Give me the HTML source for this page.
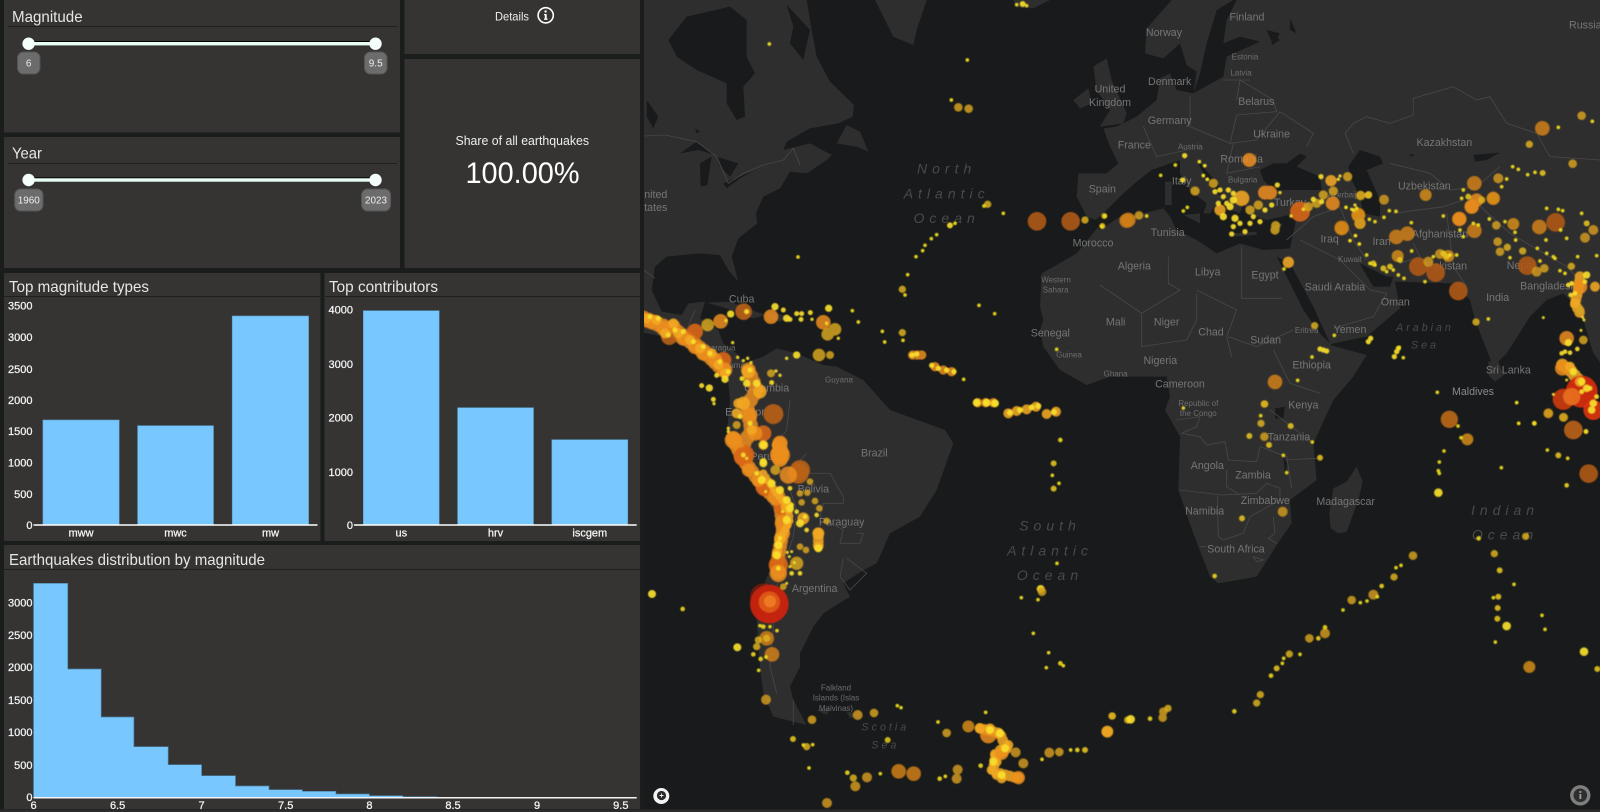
<!DOCTYPE html>
<html><head><meta charset="utf-8"><title>Earthquakes dashboard</title>
<style>
html,body{margin:0;padding:0;background:#1b1d1d;width:1600px;height:812px;overflow:hidden}
svg{display:block}
text{font-family:"Liberation Sans",sans-serif}
.t{fill:#e6e6e6;font-size:16px}
.k{fill:#f4f4f4;font-size:11px;stroke:#f4f4f4;stroke-width:.25px}
.e{text-anchor:end}.c{text-anchor:middle}
.l{fill:#767676;font-size:32px;text-anchor:middle}
.m{fill:#6e6e6e;font-size:24px;text-anchor:middle}
.o{fill:#4a4a4a;font-size:42px;font-style:italic;text-anchor:middle;letter-spacing:15px}
.p{fill:#4a4a4a;font-size:32px;font-style:italic;text-anchor:middle;letter-spacing:9px}
.land{fill:#2f2e2e}.w{fill:#181a1b}
.b{fill:none;stroke:#474747;stroke-width:2.6}
.q path{fill:none;stroke-linecap:round}
.a{stroke-width:11px;stroke:#f2e01e;opacity:.92}
.v{stroke-width:14px;stroke:#f0d81e;opacity:.9}
.n{stroke-width:18px;stroke:#e8c61e;opacity:.88}
.d{stroke-width:22px;stroke:#dcb01e;opacity:.85}
.f{stroke-width:26px;stroke:#d2a01c;opacity:.85}
.g{stroke-width:30px;stroke:#cf981c;opacity:.85}
.h{stroke-width:36px;stroke:#d48c18;opacity:.85}
.i{stroke-width:44px;stroke:#d08016;opacity:.85}
.j{stroke-width:52px;stroke:#bb6a16;opacity:.9}
.r{stroke-width:56px;stroke:#ad5914;opacity:.92}
.B{stroke:#b8621a;opacity:.92}
.D{stroke:#d8661a;opacity:.9}
.O{stroke:#ec8e1c;opacity:.85}
.A{stroke:#f3a822;opacity:.88}
.G{stroke:#d6a420;opacity:.85}
.Y{stroke:#f9de2c;opacity:.92}
.R{stroke:#cd2a10;opacity:.92}
</style></head><body>
<svg width="1600" height="812" viewBox="0 0 1600 812" xmlns="http://www.w3.org/2000/svg" style="filter:blur(.3px)">
<defs><filter id="s" x="-2%" y="-2%" width="104%" height="104%"><feGaussianBlur stdDeviation=".45"/></filter></defs>
<rect width="1600" height="812" fill="#1b1d1d"/>
<rect x="0" y="809.5" width="1600" height="3" fill="#2b2b2b"/>

<svg x="644" y="0" width="956" height="809.5" viewBox="644 0 956 809.5">
<rect x="644" y="0" width="956" height="810" fill="#181a1b"/>

<!-- Z4 land -->
<g transform="translate(630 0) scale(.33333)">
<path class="land" d="M0,0 L530,0 L545,90 L560,170 L600,245 L672,315 L668,350 L625,370 L540,385 L470,425 L460,450 L500,440 L540,430 L605,465 L530,520 L480,515 L450,565 L400,590 L378,640 L382,670 L325,715 L305,770 L325,845 L295,810 L270,765 L205,760 L110,770 L75,800 L65,870 L95,935 L155,945 L175,910 L225,905 L210,955 L265,990 L280,1030 L320,1060 L340,1090 L400,1070 L440,1045 L380,1140 L290,1140 L250,1100 L180,1050 L100,1010 L0,990 Z"/>
<path class="w" d="M115,120 L170,50 L300,20 L350,60 L350,170 L375,220 L340,260 L345,350 L320,360 L290,310 L290,250 L200,210 L140,170 Z"/>
<path class="w" d="M470,15 L540,90 L520,180 L480,130 L490,80 Z"/>
<path class="w" d="M150,460 L200,425 L255,465 L205,450 Z M210,490 L245,470 L232,555 L212,560 Z M260,470 L325,490 L300,530 L270,500 Z M280,550 L340,525 L375,510 L330,535 L290,565 Z M50,300 L85,350 L70,385 L50,350 Z M195,385 L210,395 L200,400 Z"/>
<path class="land" d="M620,430 L650,375 L690,395 L715,455 L680,440 Z M530,490 L610,460 L590,480 L530,520 Z"/>
<path class="land" d="M735,0 L890,0 L860,90 L850,135 L790,110 Z"/>
<path class="land" d="M1150,0 L1260,0 L1210,25 L1160,22 Z"/>
<path class="land" d="M1390,200 L1430,175 L1445,240 L1490,340 L1480,370 L1410,380 L1440,330 L1400,270 Z M1330,300 L1375,265 L1385,310 L1350,325 Z"/>
<path class="land" d="M230,908 L300,905 L405,945 L370,955 L290,925 Z M410,935 L480,950 L450,965 L410,960 Z"/>
<path class="b" d="M42,408 L105,405 L200,425 L260,470 L295,550 L340,520 L400,495 L460,480 L490,445 L510,495"/>
<path class="b" d="M42,810 L75,835 M195,930 L170,990"/>
<path class="b" d="M1350,1040 L1400,1040 L1380,850 L1500,935 M1235,905 L1290,905 L1290,810 L1352,810 L1352,770 L1420,760 M1352,810 L1500,900 M1240,1040 L1320,1000 M1290,1060 L1340,1130 M1400,1060 L1500,1000 M1430,1060 L1440,1130"/>
<path class="b" d="M440,1050 L420,1100 L500,1130 L510,1170 M560,1170 L600,1180 L610,1200 M690,1140 L700,1190"/>
</g>

<!-- Z5 land -->
<g transform="translate(1100 0) scale(.33333)">
<path class="land" d="M215,0 L140,85 L135,160 L190,175 L240,130 L260,195 L290,215 L280,280 L230,270 L210,220 L180,235 L170,300 L110,350 L50,380 L10,385 L30,440 L55,490 L20,520 L-65,520 L-70,590 L-40,650 L0,665 L-5,680 L-70,760 L-130,795 L-175,820 L-180,920 L-170,960 L-180,990 L-170,1040 L-120,1110 L-40,1155 L30,1130 L90,1130 L200,1130 L210,1190 L195,1230 L240,1310 L235,1470 L280,1600 L330,1730 L355,1750 L470,1730 L540,1620 L575,1570 L570,1500 L650,1440 L640,1330 L700,1200 L760,1130 L800,1065 L690,1035 L700,1030 L800,1010 L900,925 L885,845 L1060,850 L1110,900 L1125,960 L1180,1100 L1220,1060 L1290,950 L1340,900 L1390,880 L1430,920 L1450,960 L1480,1060 L1510,1100 L1510,0 Z"/>
<path class="land" d="M1165,1085 L1190,1075 L1212,1125 L1185,1145 L1165,1125 Z"/>
<path class="w" d="M400,0 L350,30 L320,130 L300,220 L280,280 L370,230 L380,170 L480,125 L420,110 L370,130 L380,60 L410,0 Z M500,90 L540,100 L520,135 Z"/>
<path class="w" d="M-20,665 L10,640 L60,590 L110,545 L155,510 L240,480 L300,490 L370,570 L370,540 L480,590 L580,630 L590,650 L570,745 L490,750 L420,730 L350,760 L290,720 L230,690 L210,650 L190,625 L130,640 L60,650 L0,690 Z"/>
<path class="land" d="M240,475 L290,480 L330,560 L375,600 L350,610 L330,640 L310,640 L320,610 L270,570 L240,520 Z M250,645 L300,640 L300,670 Z M195,545 L215,545 L215,615 L195,615 Z"/>
<path class="land" d="M330,510 L490,550 L480,600 L430,610 L420,640 L395,630 L375,590 Z M480,560 L590,560 L590,640 L500,660 L440,640 L430,600 Z M390,700 L470,695 L470,705 L395,710 Z M510,680 L550,670 L530,695 Z"/>
<path class="w" d="M490,540 L480,510 L520,490 L560,490 L600,460 L620,470 L590,500 L660,530 L665,570 L600,570 L520,570 Z"/>
<path class="w" d="M745,500 L780,450 L840,470 L850,490 L800,510 L840,600 L840,650 L790,640 L780,590 L750,530 Z"/>
<path class="w" d="M530,770 L570,790 L640,920 L690,1030 L660,1000 L610,930 Z"/>
<path class="w" d="M780,790 L860,830 L880,830 L870,860 L820,860 L790,810 Z"/>
<path class="w" d="M1120,465 L1200,458 L1160,480 L1125,485 Z M925,462 L945,465 L935,470 Z M515,100 L540,120 L515,135 Z M570,55 L590,100 L570,90 Z"/>
<path class="b" d="M205,770 L205,850 L240,870 M425,740 L425,895 L545,895 M290,870 L410,930 L380,1010 L395,1070 M125,940 L240,870 M0,855 L125,940 L125,1040 L260,1020 M290,880 L290,960 L260,1020 M385,1010 L470,1040 L580,990 M520,1050 L570,1150 L660,1180"/>
<path class="b" d="M130,380 L170,470 L260,450 M270,290 L270,380 L390,430 L470,420 L540,335 L640,400 L620,440 M410,300 L420,240 L520,300 L530,335 L410,345 L390,430 M370,240 L450,240 M400,430 L380,520 L480,500"/>
<path class="b" d="M735,400 L760,370 L800,350 L870,370 L940,345 L940,295 L1060,260 L1130,300 L1170,290 L1220,370 L1310,400 M735,400 L760,460 M870,490 L990,520 L1050,570 L1130,560 L1200,500 M1310,400 L1350,470 L1500,480"/>
<path class="b" d="M600,720 L720,780 L810,870 L860,880 L820,950 L700,985 M560,720 L640,650 L720,620 L760,720 L800,780 M880,640 L1030,620 L1090,600 M940,730 L960,770 L900,790 M1040,640 L1060,800 L1100,860 M1120,600 L1230,700 L1400,800 L1430,830"/>
<text class="l" x="441" y="62">Finland</text>
<text class="l" x="192" y="108">Norway</text>
<text class="l" x="1456" y="85">Russia</text>
<text class="m" x="435" y="178">Estonia</text>
<text class="m" x="423" y="226">Latvia</text>
<text class="l" x="209" y="255">Denmark</text>
<text class="l" x="30" y="278">United</text>
<text class="l" x="30" y="318">Kingdom</text>
<text class="l" x="469" y="315">Belarus</text>
<text class="l" x="209" y="372">Germany</text>
<text class="l" x="515" y="413">Ukraine</text>
<text class="l" x="103" y="445">France</text>
<text class="m" x="271" y="448">Austria</text>
<text class="l" x="425" y="487">Romania</text>
<text class="l" x="1033" y="438">Kazakhstan</text>
<text class="l" x="245" y="554">Italy</text>
<text class="m" x="428" y="548">Bulgaria</text>
<text class="l" x="973" y="568">Uzbekistan</text>
<text class="l" x="7" y="578">Spain</text>
<text class="l" x="570" y="618">Turkey</text>
<text class="m" x="740" y="592">Azerbaijan</text>
<text class="l" x="203" y="708">Tunisia</text>
<text class="l" x="689" y="727">Iraq</text>
<text class="l" x="845" y="735">Iran</text>
<text class="l" x="1020" y="713">Afghanistan</text>
<text class="l" x="-21" y="739">Morocco</text>
<text class="m" x="750" y="786">Kuwait</text>
<text class="l" x="1040" y="808">Pakistan</text>
<text class="l" x="1262" y="807">Nepal</text>
<text class="l" x="103" y="809">Algeria</text>
<text class="l" x="323" y="827">Libya</text>
<text class="l" x="495" y="836">Egypt</text>
<text class="l" x="705" y="872">Saudi Arabia</text>
<text class="l" x="1345" y="869">Bangladesh</text>
<text class="l" x="1193" y="903">India</text>
<text class="l" x="886" y="916">Oman</text>
<text class="l" x="47" y="977">Mali</text>
<text class="l" x="200" y="977">Niger</text>
<text class="l" x="333" y="1007">Chad</text>
<text class="l" x="750" y="999">Yemen</text>
<text class="m" x="620" y="999">Eritrea</text>
<text class="l" x="497" y="1030">Sudan</text>
<text class="l" x="181" y="1092">Nigeria</text>
<text class="l" x="635" y="1106">Ethiopia</text>
<text class="l" x="1225" y="1121">Sri Lanka</text>
<text class="l" x="1119" y="1185" style="fill:#8a8a8a">Maldives</text>
<text class="l" x="240" y="1162">Cameroon</text>
<text class="m" x="295" y="1218">Republic of</text>
<text class="l" x="610" y="1225">Kenya</text>
<text class="m" x="47" y="1130">Ghana</text>
<text class="p" x="975" y="993">Arabian</text>
<text class="p" x="975" y="1046">Sea</text>
</g>

<!-- Z6 land -->
<g transform="translate(630 400) scale(.33333)">
<path class="land" d="M290,-100 L340,-110 L400,-130 L440,-155 L500,-140 L580,-105 L620,-100 L700,-60 L780,30 L945,90 L970,130 L920,270 L870,350 L780,400 L740,490 L700,510 L640,550 L660,590 L580,640 L550,680 L510,760 L510,800 L480,860 L490,900 L530,975 L470,960 L430,950 L400,880 L390,800 L380,660 L400,560 L430,480 L440,400 L430,330 L390,270 L310,170 L290,100 L300,0 Z"/>
<path class="b" d="M530,160 L510,180 L540,220 L600,220 L640,290 L640,310 L580,310 L570,350 L640,390 L630,430 L690,430 L700,400 L680,400 M640,475 L630,530 L660,570 L710,520 L650,475 M470,240 L500,330 L490,410 L440,560 L420,800 L440,880 M480,0 L470,90 L420,160 M490,900 L490,975"/>
<path class="land" d="M560,930 L600,925 L590,945 Z M650,935 L690,945 L660,955 Z"/>
<text class="l" x="733" y="169">Brazil</text>
<text class="l" x="550" y="278">Bolivia</text>
<text class="l" x="395" y="180">Peru</text>
<text class="l" x="635" y="376">Paraguay</text>
<text class="l" x="554" y="576">Argentina</text>
<text class="l" x="345" y="47">Ecuador</text>
<text class="m" x="618" y="872">Falkland</text>
<text class="m" x="618" y="902">Islands (Islas</text>
<text class="m" x="618" y="933">Malvinas)</text>
<text class="o" x="1260" y="392">South</text>
<text class="o" x="1260" y="466">Atlantic</text>
<text class="o" x="1260" y="540">Ocean</text>
<text class="p" x="766" y="992">Scotia</text>
<text class="p" x="766" y="1045">Sea</text>
</g>

<!-- Z7 land -->
<g transform="translate(1100 400) scale(.33333)">
<path class="land" d="M770,200 L788,245 L775,300 L740,395 L715,400 L692,385 L688,340 L700,265 L740,245 Z"/>
<path class="w" d="M525,25 L555,20 L550,55 L525,55 Z M550,170 L562,190 L555,225 Z"/>
<path class="b" d="M230,60 L300,50 L290,80 L245,100 L300,110 L320,135 L375,125 L385,180 L470,185 L480,140 M240,270 L365,285 L470,280 L500,250 L540,265 L540,300 L450,350 L430,400 L370,420 L355,410 L352,290 M380,210 L380,260 L420,285 M560,180 L650,175 M480,140 L560,170 L575,265 M510,30 L640,130 M520,350 L525,400 L505,415 L530,430 M300,440 L320,440 M460,470 L490,480 L470,485 Z"/>
<text class="m" x="295" y="48">the Congo</text>
<text class="l" x="567" y="121">Tanzania</text>
<text class="l" x="322" y="207">Angola</text>
<text class="l" x="459" y="235">Zambia</text>
<text class="l" x="496" y="312">Zimbabwe</text>
<text class="l" x="737" y="315">Madagascar</text>
<text class="l" x="314" y="343">Namibia</text>
<text class="l" x="408" y="457">South Africa</text>
<text class="o" x="1215" y="345">Indian</text>
<text class="o" x="1215" y="418">Ocean</text>
</g>

<!-- Z4 labels -->
<g transform="translate(630 0) scale(.33333)">
<text class="l" x="112" y="594" style="text-anchor:end">United</text>
<text class="l" x="112" y="633" style="text-anchor:end">States</text>
<text class="l" x="335" y="907">Cuba</text>
<text class="m" x="627" y="1148">Guyana</text>
<text class="l" x="1261" y="1010">Senegal</text>
<text class="m" x="1317" y="1073">Guinea</text>
<text class="m" x="1278" y="848">Western</text>
<text class="m" x="1277" y="878">Sahara</text>
<text class="l" x="410" y="1175">Colombia</text>
<text class="m" x="262" y="1051">Nicaragua</text>
<text class="m" x="300" y="1104">Panama</text>
<text class="o" x="950" y="521">North</text>
<text class="o" x="950" y="595">Atlantic</text>
<text class="o" x="950" y="669">Ocean</text>
</g>

<g filter="url(#s)">
<!-- Z4 quakes -->
<g class="q" transform="translate(630 0) scale(.33333)">
<path class="r" d="M1221,664h0M1322,664h0"/>
<path class="i" d="M1490,662h0"/>
<path class="f" d="M985,322h0M1016,326h0"/>
<path class="O" stroke-width="28" d="M848,1065h0M862,1065h0M875,1065h0M915,1100h0M940,1110h0M965,1115h0M1043,1208h0M1067,1208h0M1090,1208h0"/>
<path class="Y" stroke-width="16" d="M846,1065h0M860,1062h0M905,1096h0M925,1105h0M950,1110h0M1040,1208h0M1066,1208h0M1095,1210h0M972,1115h0"/>
<path class="d" d="M1365,660h0M1073,613h0M817,998h0M817,868h0"/>
<path class="Y" stroke-width="18" d="M960,676h0M1178,12h0"/>
<path class="n" d="M1423,648h0M1417,678h0"/>
<path class="a" d="M418,132h0M1012,180h0M964,300h0M504,771h0M920,704h0M904,716h0M885,736h0M878,752h0M858,770h0M833,824h0M825,885h0M1120,640h0M1047,916h0M1094,941h0M1001,1138h0M819,1021h0M764,1026h0M757,994h0M667,932h0M685,966h0M1280,1048h0M1160,14h0M1190,17h0M1062,618h0M975,670h0"/>
</g>

<!-- Central America / Colombia cluster -->
<g class="q" transform="translate(640 290) scale(.33333)">
<path class="O" stroke-width="46" stroke-dasharray="0 16" d="M10,85 L60,105 L110,125 L160,160 L210,200 L255,245"/>
<path class="O" stroke-width="44" stroke-dasharray="0 20" d="M325,240 L350,300 L320,350 L335,420 L300,480"/>
<path class="B" stroke-width="50" d="M88,140h0M311,65h0"/>
<path class="B" stroke-width="60" d="M400,372h0M480,540h0"/>
<path class="D" stroke-width="62" d="M312,495h0"/>
<path class="D" stroke-width="48" d="M370,430h0M250,210h0M165,125h0"/>
<path class="O" stroke-width="44" d="M35,95h0M70,115h0M100,110h0M130,145h0M165,170h0M190,190h0M225,210h0M255,240h0M242,94h0M280,445h0M345,430h0M330,375h0M393,80h0M550,97h0"/>
<path class="O" stroke-width="60" d="M420,495h0"/>
<path class="G" stroke-width="38" d="M203,105h0M563,133h0M585,118h0M537,195h0"/>
<path class="A" stroke-width="40" d="M325,245h0M360,305h0M310,340h0"/>
<path class="A" stroke-width="30" d="M20,85h0M50,90h0M75,130h0M100,100h0M115,130h0M150,150h0M180,175h0M215,190h0M235,225h0M255,250h0M295,340h0M290,370h0M335,420h0M410,465h0"/>
<path class="G" stroke-width="24" d="M290,405h0M393,250h0M570,195h0"/>
<path class="Y" stroke-width="22" d="M272,72h0M405,50h0M566,55h0M440,85h0M350,280h0M320,280h0M208,294h0M470,195h0M372,465h0M370,515h0M255,268h0"/>
<path class="Y" stroke-width="15" d="M30,80h0M55,85h0M85,135h0M105,120h0M130,125h0M160,155h0M190,170h0M210,190h0M240,215h0M265,245h0M430,60h0M450,88h0M470,71h0M485,71h0M483,88h0M511,68h0M320,65h0M395,278h0M185,287h0M220,328h0M306,266h0M230,256h0M330,240h0M330,400h0M300,380h0M310,490h0M320,505h0"/>
<path class="Y" stroke-width="10" d="M258,92h0M516,88h0M278,158h0M293,202h0M310,212h0M323,205h0M333,218h0M420,256h0M408,243h0M222,341h0M440,205h0M265,415h0M265,425h0M560,100h0M595,145h0"/>
</g>

<!-- Andes cluster -->
<g class="q" transform="translate(700 440) scale(.33333)">
<path class="O" stroke-width="42" stroke-dasharray="0 16" d="M100,0 L130,60 L190,140 L240,190 L250,260 L240,320 L230,380 L235,400"/>
<path class="O" stroke-width="46" stroke-dasharray="0 16" d="M240,10 L240,65"/>
<path class="A" stroke-width="32" stroke-dasharray="0 12" d="M355,280 L355,325"/>
<circle cx="208" cy="492" r="58" fill="#cb2410" opacity=".95"/>
<circle cx="190" cy="470" r="40" fill="#c0200e" opacity=".45"/>
<circle cx="208" cy="486" r="32" fill="#e05a18" opacity=".9"/>
<circle cx="210" cy="484" r="18" fill="#ee7e24" opacity=".9"/>
<path class="B" stroke-width="62" d="M295,100h0"/>
<path class="D" stroke-width="58" d="M130,50h0M195,140h0M235,375h0M250,200h0"/>
<path class="O" stroke-width="52" d="M240,40h0M265,105h0M230,170h0M250,250h0M235,400h0M100,0h0"/>
<path class="O" stroke-width="40" d="M145,90h0M175,120h0M250,280h0M240,10h0"/>
<path class="G" stroke-width="30" d="M226,90h0"/>
<path class="G" stroke-width="40" d="M290,370h0"/>
<path class="A" stroke-width="36" d="M355,280h0M310,235h0M260,200h0M240,295h0"/>
<path class="A" stroke-width="30" d="M355,320h0M230,340h0M190,15h0"/>
<path class="A" stroke-width="24" stroke-dasharray="0 14" d="M190,100 L230,160 L265,200 L270,240 L240,300 L232,350"/>
<path class="G" stroke-width="20" d="M330,125h0M300,160h0M322,158h0M305,187h0M345,183h0M358,205h0M380,243h0M300,320h0M318,330h0M250,440h0"/>
<path class="Y" stroke-width="24" d="M190,15h0M190,70h0M185,120h0M215,130h0M240,150h0M260,180h0M270,205h0M260,240h0M300,250h0M235,315h0M230,345h0M355,325h0"/>
<path class="Y" stroke-width="14" d="M130,45h0M170,100h0M315,230h0M290,215h0M270,145h0M275,195h0M350,225h0M320,270h0M240,295h0M235,385h0M300,400h0M275,400h0"/>
<path class="Y" stroke-width="9" d="M140,55h0M197,155h0M248,215h0M262,337h0M275,335h0M268,350h0M283,368h0M270,380h0M260,430h0"/>
</g>

<!-- Turkey / Greece cluster -->
<g class="q" transform="translate(1190 160) scale(.33333)">
<path class="D" stroke-width="60" d="M330,155h0"/>
<path class="O" stroke-width="42" d="M225,98h0M240,98h0M428,130h0M178,0h0M505,165h0"/>
<path class="G" stroke-width="40" d="M455,205h0"/>
<path class="A" stroke-width="46" d="M155,115h0"/>
<path class="A" stroke-width="34" d="M90,150h0M295,307h0M510,190h0M423,62h0"/>
<path class="G" stroke-width="28" d="M15,93h0M70,70h0M180,150h0M205,135h0M473,50h0M430,93h0M400,105h0M380,130h0M512,107h0M257,197h0M255,210h0M355,140h0"/>
<path class="Y" stroke-width="22" d="M120,140h0M100,170h0M130,120h0M135,175h0M535,105h0"/>
<path class="Y" stroke-width="16" d="M75,95h0M90,90h0M115,90h0M130,100h0M100,110h0M110,130h0M85,130h0M130,200h0M125,222h0M150,190h0M165,215h0M180,190h0M190,170h0M210,185h0M225,150h0M245,135h0M262,75h0M393,50h0M370,118h0M395,125h0"/>
<path class="Y" stroke-width="10" d="M270,98h0M52,58h0M40,46h0M28,5h0M45,17h0M303,168h0M340,148h0M445,58h0M450,48h0M468,142h0M485,148h0M495,135h0M500,155h0M480,242h0M508,252h0M497,227h0M455,218h0"/>
</g>

<!-- Z5 quakes -->
<g class="q" transform="translate(1100 0) scale(.33333)">
<path class="r" d="M1367,667h0M1282,797h0M1075,873h0M955,800h0M1007,818h0"/>
<path class="i" d="M725,684h0M889,711h0M922,701h0M1115,620h0M1123,550h0M1327,385h0M85,660h0M525,1146h0M1078,657h0M1123,692h0M1318,681h0"/>
<path class="O" stroke-width="40" d="M1078,657h0M1130,600h0M1115,620h0M1180,595h0"/>
<path class="h" d="M977,585h0M1045,768h0M893,768h0M1178,595h0M1240,672h0M775,645h0"/>
<path class="g" d="M780,670h0M852,599h0M985,785h0M1195,535h0M1310,815h0M1455,713h0M1020,762h0M1480,690h0"/>
<path class="f" d="M1189,676h0M1193,725h0M1200,755h0M1333,805h0M1418,491h0M1445,347h0M117,646h0M782,585h0"/>
<path class="d" d="M1222,742h0M1268,753h0M1288,433h0M1414,799h0M493,1212h0M644,977h0M1128,966h0M806,584h0M1145,600h0"/>
<path class="Y" stroke-width="16" d="M254,467h0M248,540h0M805,1025h0M812,1015h0M895,1045h0M890,1055h0M883,1070h0M660,1047h0M680,1053h0M670,1050h0"/>
<path class="n" d="M1328,519h0M1030,760h0M870,800h0M850,805h0M820,790h0M1105,590h0M1460,670h0M900,780h0M1040,770h0"/>
<path class="a" d="M226,495h0M298,485h0M314,497h0M182,526h0M262,622h0M250,633h0M310,527h0M322,538h0M738,622h0M760,630h0M770,625h0M750,722h0M766,707h0M778,732h0M808,658h0M825,665h0M852,652h0M868,632h0M888,634h0M934,668h0M935,753h0M800,765h0M810,790h0M825,795h0M860,815h0M880,810h0M895,825h0M912,835h0M975,845h0M1030,648h0M1090,710h0M1080,690h0M1120,670h0M1135,675h0M1168,657h0M1215,665h0M1245,697h0M1247,720h0M1305,517h0M1283,524h0M1238,500h0M1255,508h0M1375,382h0M1477,364h0M1340,625h0M1375,628h0M1388,632h0M1338,720h0M1312,745h0M1340,760h0M1320,783h0M1360,770h0M1365,775h0M1382,690h0M1400,715h0M1433,770h0M1380,812h0M1395,820h0M1165,957h0M636,1071h0M593,1141h0M703,1006h0M898,1042h0M910,1073h0M552,807h0M1230,773h0M1090,570h0M1085,595h0M1205,560h0M1220,537h0M1490,767h0M1445,640h0M15,648h0M5,680h0M140,648h0M1000,770h0M1050,765h0M1070,765h0M1012,1177h0M1250,1208h0"/>
</g>

<!-- Sumatra cluster -->
<g class="q" transform="translate(1500 270) scale(.33333)">
<path class="A" stroke-width="32" stroke-dasharray="0 14" d="M240,20 L235,60 L225,100 L240,130"/>
<path class="A" stroke-width="38" stroke-dasharray="0 16" d="M187,285 L210,300 L240,335"/>
<path class="B" stroke-width="56" d="M220,480h0"/>
<circle cx="245" cy="365" r="48" fill="#d42c10" opacity=".95"/>
<circle cx="190" cy="388" r="32" fill="#cf3a12" opacity=".9"/>
<circle cx="280" cy="420" r="30" fill="#d8340f" opacity=".95"/>
<circle cx="215" cy="380" r="26" fill="#e8701c" opacity=".9"/>
<path class="O" stroke-width="44" d="M200,205h0M187,295h0M240,50h0"/>
<path class="A" stroke-width="30" d="M210,290h0M240,335h0M225,100h0M285,50h0"/>
<path class="G" stroke-width="26" d="M250,210h0M145,430h0M190,442h0M240,120h0"/>
<path class="Y" stroke-width="22" d="M205,218h0M220,305h0M260,355h0M280,400h0M275,420h0M245,335h0M260,15h0"/>
<path class="Y" stroke-width="14" d="M185,250h0M195,245h0M210,248h0M232,237h0M245,365h0M270,355h0M290,380h0M103,460h0M258,485h0M212,75h0M225,70h0M205,45h0M215,40h0M255,35h0"/>
<path class="Y" stroke-width="9" d="M243,181h0M200,330h0M160,373h0M130,143h0M50,397h0M56,460h0M248,142h0M252,150h0"/>
</g>

<!-- Z6 quakes -->
<g class="q" transform="translate(630 400) scale(.33333)">
<path class="i" d="M410,715h0M426,763h0M806,1114h0M851,1121h0"/>
<path class="h" d="M1015,979h0"/>
<path class="A" stroke-width="32" stroke-dasharray="0 14" d="M1050,985 L1110,1000 L1130,1050 L1095,1070 L1090,1115 L1165,1135"/>
<path class="O" stroke-width="50" d="M1075,1005h0"/>
<path class="A" stroke-width="30" d="M1050,985h0M1080,985h0M1108,1000h0M1135,1035h0M1110,1050h0M1095,1062h0M1100,1085h0M1085,1110h0M1100,1125h0M1115,1135h0M1165,1133h0"/>
<path class="O" stroke-width="40" d="M1115,1060h0M1165,1133h0"/>
<path class="g" d="M408,899h0M683,945h0M676,1159h0M711,1132h0M983,1109h0M980,1136h0M591,1209h0M1258,1058h0M1432,995h0M1180,1090h0M1157,1057h0"/>
<path class="A" stroke-width="30" d="M1135,40h0M1160,33h0M1190,28h0M1218,20h0M1250,42h0M1278,35h0"/>
<path class="Y" stroke-width="18" d="M1140,38h0M1170,30h0M1205,22h0M1225,18h0M1272,36h0"/>
<path class="Y" stroke-width="24" d="M1040,8h0M1070,8h0M1095,10h0M1232,567h0M66,582h0M322,742h0M1080,990h0M1110,1000h0M1125,1045h0M1090,1085h0M1115,1125h0"/>
<path class="f" d="M546,959h0M732,939h0M950,999h0M1288,1056h0M1236,575h0"/>
<path class="d" d="M530,1040h0M670,1134h0M1447,948h0M1493,960h0M385,720h0M380,740h0M410,715h0"/>
<path class="n" d="M489,1017h0M1271,190h0M773,1020h0M1365,1050h0M1271,266h0"/>
<path class="v" d="M158,627h0M1052,1097h0M1342,1050h0M1291,120h0M1291,790h0M929,1136h0M652,1118h0M400,680h0M370,763h0M392,777h0"/>
<path class="a" d="M390,677h0M420,680h0M441,692h0M408,771h0M386,811h0M520,1035h0M548,1034h0M537,1104h0M751,1121h0M802,917h0M813,923h0M924,966h0M946,1129h0M1067,937h0M1236,1078h0M1322,1050h0M1267,226h0M1287,250h0M1281,490h0M1174,593h0M1224,599h0M1210,700h0M1256,758h0M1249,803h0M1300,797h0"/>
</g>

<!-- Z7 quakes -->
<g class="q" transform="translate(1100 400) scale(.33333)">
<path class="r" d="M1466,221h0"/>
<path class="j" d="M1048,58h0"/>
<path class="h" d="M1102,118h0M1288,801h0"/>
<path class="A" stroke-width="36" d="M22,995h0"/>
<path class="g" d="M548,335h0M1345,40h0M820,584h0M675,700h0"/>
<path class="f" d="M1391,52h0M939,467h0M493,110h0M755,600h0M628,715h0M190,935h0M188,953h0"/>
<path class="Y" stroke-width="26" d="M1015,278h0M1220,678h0M1452,755h0M92,958h0"/>
<path class="d" d="M882,531h0M481,884h0M470,909h0M204,925h0M36,948h0M494,12h0M483,70h0M1277,409h0M1183,461h0M568,762h0"/>
<path class="n" d="M572,78h0M448,108h0M507,135h0M426,355h0M660,173h0M1375,166h0M1199,511h0M1195,590h0M1193,624h0M1192,656h0M530,805h0M1492,807h0"/>
<path class="v" d="M344,528h0M1458,94h0M1303,70h0M1400,256h0M1136,415h0M845,558h0M655,715h0M675,682h0M513,827h0M403,934h0M150,956h0"/>
<path class="a" d="M250,24h0M482,47h0M550,166h0M637,126h0M560,218h0M1074,78h0M1083,113h0M1032,153h0M1018,186h0M1015,212h0M1018,220h0M1204,203h0M1256,70h0M1342,150h0M1403,175h0M1242,553h0M1180,593h0M1326,646h0M1335,688h0M1186,726h0M888,503h0M903,496h0M832,590h0M781,608h0M801,603h0M729,630h0M600,763h0M551,775h0M547,790h0"/>
</g>
</g>

<!-- map controls -->
<circle cx="661.3" cy="796" r="8" fill="#f4f4f4"/>
<circle cx="661.5" cy="795.5" r="4.6" fill="#2b2b2b"/>
<path d="M658.6,799 L659.5,795 L661,798 Z" fill="#2b2b2b"/>
<path d="M661.5,793.5 v4 M659.5,795.5 h4" stroke="#eee" stroke-width=".9"/>
<circle cx="1580.3" cy="795.3" r="10.2" fill="#7f7f7f"/>
<circle cx="1580.3" cy="795.3" r="6.8" fill="#2e2e2e"/>
<rect x="1579.4" y="794" width="1.9" height="5" fill="#9a9a9a"/>
<rect x="1579.4" y="791" width="1.9" height="1.9" fill="#9a9a9a"/>
</svg>

<!-- panels -->
<g fill="#353433">
<rect x="4" y="0" width="396" height="132.5"/>
<rect x="4" y="137" width="396" height="131"/>
<rect x="404.5" y="0" width="235.5" height="54"/>
<rect x="404.5" y="59" width="235.5" height="209"/>
<rect x="4" y="273" width="316.4" height="268"/>
<rect x="324.5" y="273" width="315.5" height="268"/>
<rect x="4" y="545" width="636" height="264"/>
</g>
<g stroke="#1f1f1f" stroke-width="1">
<path d="M8,26.5 H397 M8,163.5 H397 M4,296.5 H320 M325,296.5 H640 M4,569.5 H640"/>
</g>

<!-- slider magnitude -->
<text class="t" x="12" y="22" textLength="70.6" lengthAdjust="spacingAndGlyphs">Magnitude</text>
<rect x="28" y="41" width="348" height="1" fill="#000"/>
<rect x="28" y="42" width="348" height="3.4" fill="#e8fff6"/>
<circle cx="28.6" cy="43.7" r="6.2" fill="#f4fffb"/>
<circle cx="375.5" cy="43.7" r="6.2" fill="#f4fffb"/>
<rect x="17.5" y="52" width="22.5" height="22" rx="6" fill="#6c6c6c" stroke="#555" stroke-width="1"/>
<rect x="364.5" y="52" width="22.5" height="22" rx="6" fill="#6c6c6c" stroke="#555" stroke-width="1"/>
<text x="28.7" y="66.5" fill="#eee" font-size="10" class="c">6</text>
<text x="375.7" y="66.5" fill="#eee" font-size="10" class="c">9.5</text>

<!-- slider year -->
<text class="t" x="12" y="158.5" textLength="30" lengthAdjust="spacingAndGlyphs">Year</text>
<rect x="28" y="177.3" width="348" height="1" fill="#000"/>
<rect x="28" y="178.3" width="348" height="3.4" fill="#e8fff6"/>
<circle cx="28.6" cy="180" r="6.2" fill="#f4fffb"/>
<circle cx="375.5" cy="180" r="6.2" fill="#f4fffb"/>
<rect x="14.7" y="189" width="28.3" height="22" rx="6" fill="#6c6c6c" stroke="#555" stroke-width="1"/>
<rect x="361.6" y="189" width="29" height="22" rx="6" fill="#6c6c6c" stroke="#555" stroke-width="1"/>
<text x="28.8" y="203.5" fill="#eee" font-size="10" class="c" textLength="22" lengthAdjust="spacingAndGlyphs">1960</text>
<text x="376" y="203.5" fill="#eee" font-size="10" class="c" textLength="22" lengthAdjust="spacingAndGlyphs">2023</text>

<!-- details -->
<text x="495" y="20.3" fill="#eee" font-size="12" textLength="34" lengthAdjust="spacingAndGlyphs">Details</text>
<circle cx="545.7" cy="15.3" r="7.6" fill="none" stroke="#fff" stroke-width="1.6"/>
<rect x="544.8" y="14" width="1.9" height="5.6" fill="#fff"/>
<rect x="544" y="14" width="2" height="1.2" fill="#fff"/>
<rect x="544" y="18.6" width="3.6" height="1.2" fill="#fff"/>
<circle cx="545.6" cy="11.5" r="1.2" fill="#fff"/>
<text x="455.5" y="145" fill="#eee" font-size="13" textLength="133.5" lengthAdjust="spacingAndGlyphs">Share of all earthquakes</text>
<text x="465.5" y="183" fill="#fff" font-size="30" textLength="114" lengthAdjust="spacingAndGlyphs">100.00%</text>

<!-- chart 1 -->
<text class="t" x="9" y="292" textLength="140" lengthAdjust="spacingAndGlyphs">Top magnitude types</text>
<g fill="#78c7fe" stroke="#5a9bc6" stroke-width=".6">
<rect x="42.9" y="420" width="76.3" height="105"/>
<rect x="137.6" y="425.7" width="75.9" height="99.3"/>
<rect x="232.2" y="316" width="76.4" height="209"/>
</g>
<path d="M33.5,525 H317.5" stroke="#fff" stroke-width="1.5"/>
<g class="k e">
<text x="32.5" y="309.5">3500</text><text x="32.5" y="341">3000</text><text x="32.5" y="373">2500</text><text x="32.5" y="404">2000</text><text x="32.5" y="435">1500</text><text x="32.5" y="466.5">1000</text><text x="32.5" y="498">500</text><text x="32.5" y="529">0</text>
</g>
<g class="k c">
<text x="81" y="536.5">mww</text><text x="175.5" y="536.5">mwc</text><text x="270.5" y="536.5">mw</text>
</g>

<!-- chart 2 -->
<text class="t" x="329" y="292" textLength="109" lengthAdjust="spacingAndGlyphs">Top contributors</text>
<g fill="#78c7fe" stroke="#5a9bc6" stroke-width=".6">
<rect x="363.3" y="310.7" width="75.9" height="214.3"/>
<rect x="457.6" y="407.7" width="75.9" height="117.3"/>
<rect x="551.8" y="439.7" width="76" height="85.3"/>
</g>
<path d="M353.9,525 H636.7" stroke="#fff" stroke-width="1.5"/>
<g class="k e">
<text x="353" y="313.5">4000</text><text x="353" y="368">3000</text><text x="353" y="421.5">2000</text><text x="353" y="476">1000</text><text x="353" y="529">0</text>
</g>
<g class="k c">
<text x="401.3" y="536.5">us</text><text x="495.5" y="536.5">hrv</text><text x="589.8" y="536.5">iscgem</text>
</g>

<!-- histogram -->
<text class="t" x="9" y="565" textLength="256" lengthAdjust="spacingAndGlyphs">Earthquakes distribution by magnitude</text>
<path d="M33.5,798 V583.3 H67.8 V669 H101.2 V717 H133.9 V746.7 H168.2 V764.7 H201.6 V775.7 H235.5 V786 H269 V789.7 H302.4 V791.3 H335.9 V794 H369.4 V795.7 H402.9 V796.7 H436.7 V798 Z" fill="#78c7fe" stroke="#4b7f9f" stroke-width=".7"/>
<path d="M33.5,797.7 H636.7" stroke="#f4f4f4" stroke-width="1.5"/>
<g class="k e">
<text x="32.5" y="606.5">3000</text><text x="32.5" y="639">2500</text><text x="32.5" y="671">2000</text><text x="32.5" y="704">1500</text><text x="32.5" y="736">1000</text><text x="32.5" y="769">500</text><text x="32.5" y="801">0</text>
</g>
<g class="k c">
<text x="33.5" y="809">6</text><text x="117.6" y="809">6.5</text><text x="201.6" y="809">7</text><text x="285.7" y="809">7.5</text><text x="369.4" y="809">8</text><text x="453" y="809">8.5</text><text x="537" y="809">9</text><text x="620.8" y="809">9.5</text>
</g>
</svg>
</body></html>
